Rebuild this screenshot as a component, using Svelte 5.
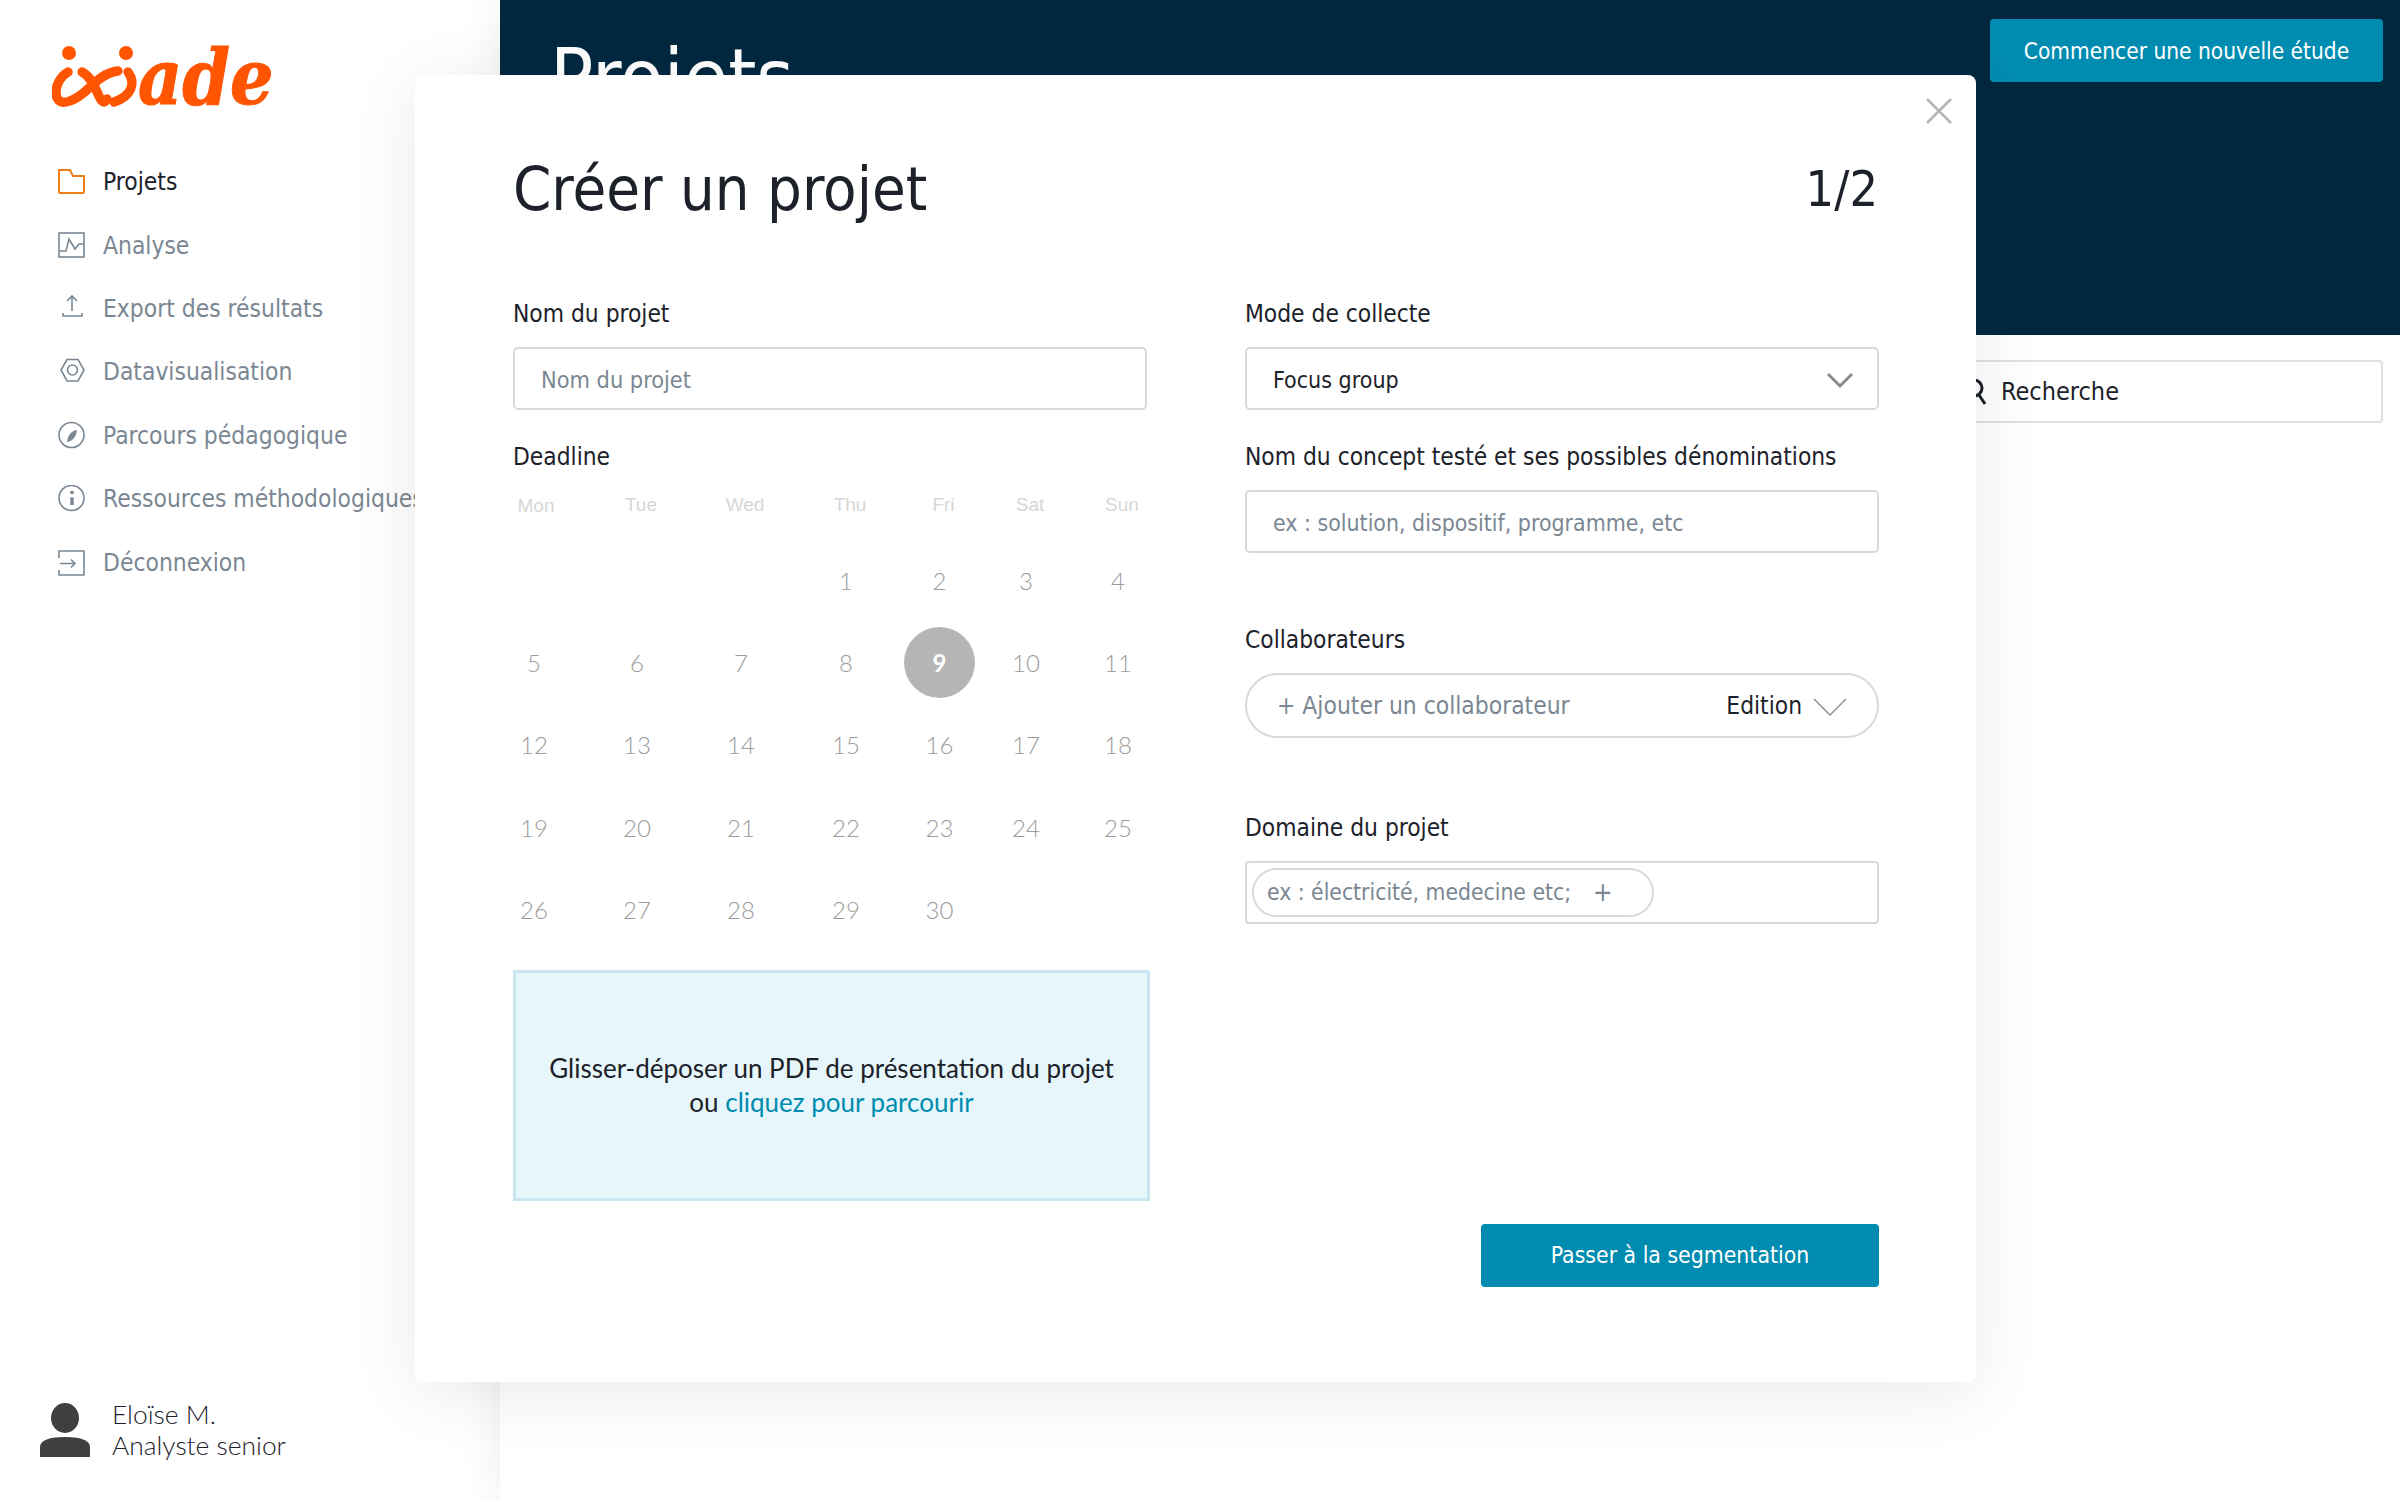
<script lang="ts">
	const navItems = [
		{ label: 'Projets', icon: 'folder', active: true },
		{ label: 'Analyse', icon: 'chart' },
		{ label: 'Export des résultats', icon: 'upload' },
		{ label: 'Datavisualisation', icon: 'hex' },
		{ label: 'Parcours pédagogique', icon: 'compass' },
		{ label: 'Ressources méthodologiques', icon: 'info' },
		{ label: 'Déconnexion', icon: 'logout' }
	];

	const weekDays = ['Mon', 'Tue', 'Wed', 'Thu', 'Fri', 'Sat', 'Sun'];
	const selectedDay = 9;

	// June starts on a Thursday here, so three empty cells first
	const days: (number | null)[] = [null, null, null, ...Array.from({ length: 30 }, (_, i) => i + 1)];
</script>

<div class="page">
	<aside class="sidebar">
		<div class="logo">
			<svg class="logo-mark" width="92" height="72" viewBox="0 0 276 216" aria-hidden="true">
				<circle cx="51" cy="39" r="21" />
				<circle cx="222" cy="39" r="21" />
				<path d="M48 96C18 114 6 150 15 174C27 198 66 186 108 147C132 123 162 96 198 93" />
				<path d="M90 96C114 108 126 135 138 162C147 183 156 195 165 177" />
				<path d="M228 96C252 129 240 168 186 186" />
			</svg>
			<span class="logo-text">ade</span>
		</div>

		<nav class="nav">
			{#each navItems as item}
				<div class="nav-item" class:active={item.active}>
					<svg class="nav-icon" width="30" height="28" viewBox="0 0 30 28" aria-hidden="true">
						{#if item.icon === 'folder'}
							<path d="M2 2h11l3 6h11v16a1 1 0 0 1-1 1H3a1 1 0 0 1-1-1z" />
						{:else if item.icon === 'chart'}
							<rect x="2" y="2" width="25" height="24" />
							<path d="M3 20h6l3-12 6 10 4-5h5" />
						{:else if item.icon === 'upload'}
							<path d="M15 2v15M10 7l5-5 5 5M6 19v3h19v-3" />
						{:else if item.icon === 'hex'}
							<path d="M10 1.5h11L27 12l-6 11H10L4 12z" />
							<circle cx="15.5" cy="12" r="5" />
						{:else if item.icon === 'compass'}
							<circle cx="14.5" cy="14" r="12.5" />
							<path class="fill" d="M20 9c-6 1-9 5-10 12 6-1 9-5 10-12z" />
						{:else if item.icon === 'info'}
							<circle cx="14.5" cy="13" r="12.5" />
							<path class="thick" d="M15 12.5v7.5M15 6v3" />
						{:else}
							<path d="M2 10V3h25v24H2v-5M3 15.5h15M14 11.5l4 4-4 4" />
						{/if}
					</svg>
					<span>{item.label}</span>
				</div>
			{/each}
		</nav>

		<div class="user">
			<svg width="50" height="54" viewBox="0 0 50 54" aria-hidden="true">
				<ellipse cx="25" cy="15" rx="14" ry="15" fill="#3f3f3f" />
				<path d="M0 54V44C0 37 10 34 25 34S50 37 50 44V54z" fill="#3f3f3f" />
			</svg>
			<div class="user-text">
				<div>Eloïse M.</div>
				<div>Analyste senior</div>
			</div>
		</div>
	</aside>

	<main class="main">
		<header class="hero">
			<h1>Projets</h1>
			<button class="btn btn-new">Commencer une nouvelle étude</button>
		</header>
		<div class="search">
			<svg width="22" height="26" viewBox="0 0 22 26" aria-hidden="true">
				<circle cx="9" cy="9" r="8" />
				<path d="M14 16l6 9" />
			</svg>
			<span>Recherche</span>
		</div>
	</main>

	<section class="modal">
		<svg class="close" width="26" height="26" viewBox="0 0 26 26" aria-hidden="true">
			<path d="M1 1l24 24M25 1L1 25" />
		</svg>

		<div class="modal-head">
			<h2>Créer un projet</h2>
			<span class="step">1/2</span>
		</div>

		<div class="columns">
			<div class="col">
				<div class="label">Nom du projet</div>
				<div class="field placeholder">Nom du projet</div>

				<div class="label deadline">Deadline</div>
				<div class="calendar">
					{#each weekDays as day}
						<div class="weekday" class:first={day === 'Mon'}>{day}</div>
					{/each}
					{#each days as day}
						<div class="day">
							{#if day === selectedDay}
								<span class="day-selected">{day}</span>
							{:else if day}
								{day}
							{/if}
						</div>
					{/each}
				</div>

				<div class="dropzone">
					<div>Glisser-déposer un PDF de présentation du projet</div>
					<div>ou <span class="link">cliquez pour parcourir</span></div>
				</div>
			</div>

			<div class="col">
				<div class="label">Mode de collecte</div>
				<div class="field select">
					<span>Focus group</span>
					<svg width="28" height="16" viewBox="0 0 28 16" aria-hidden="true">
						<path d="M2 2l12 12L26 2" />
					</svg>
				</div>

				<div class="label deadline">Nom du concept testé et ses possibles dénominations</div>
				<div class="field placeholder concept">ex : solution, dispositif, programme, etc</div>

				<div class="label collab-label">Collaborateurs</div>
				<div class="pill-field">
					<span class="placeholder-text">+ Ajouter un collaborateur</span>
					<span class="edition">
						Edition
						<svg width="34" height="18" viewBox="0 0 34 18" aria-hidden="true">
							<path d="M1 1l16 16L33 1" />
						</svg>
					</span>
				</div>

				<div class="label domain-label">Domaine du projet</div>
				<div class="tag-field">
					<div class="tag">
						<span>ex : électricité, medecine etc;</span>
						<span class="tag-plus">+</span>
					</div>
				</div>

				<button class="btn btn-next">Passer à la segmentation</button>
			</div>
		</div>
	</section>
</div>

<style>
	:global(body) {
		margin: 0;
		background: #fff;
	}

	.page {
		position: relative;
		display: flex;
		width: 2400px;
		height: 1500px;
		overflow: hidden;
		font-family: 'DejaVu Sans', sans-serif;
		font-stretch: condensed;
		font-size: 24.3px;
		color: #1d2129;
	}

	.sidebar {
		display: flex;
		flex-direction: column;
		width: 500px;
		flex-shrink: 0;
		background: #fff;
	}

	.logo {
		display: flex;
		align-items: flex-end;
		height: 72px;
		margin: 44px 0 0 52px;
		color: #ff5500;
	}

	.logo-mark {
		flex-shrink: 0;
		margin-bottom: 4px;
	}

	.logo-mark circle {
		fill: #ff5500;
	}

	.logo-mark path {
		fill: none;
		stroke: #ff5500;
		stroke-width: 28;
		stroke-linecap: round;
	}

	.logo-text {
		margin-left: -6px;
		font-family: 'DejaVu Serif', serif;
		font-stretch: condensed;
		font-style: italic;
		font-weight: 700;
		font-size: 76px;
		line-height: 76px;
		-webkit-text-stroke: 1px #ff5500;
	}

	.nav {
		display: flex;
		flex-direction: column;
		margin-top: 34px;
		padding-left: 57px;
	}

	.nav-item {
		display: flex;
		align-items: center;
		gap: 16px;
		height: 63.4px;
		white-space: nowrap;
		color: #7a8793;
		font-size: 24.4px;
	}

	.nav-item.active {
		color: #1d2129;
	}

	.nav-icon {
		flex-shrink: 0;
		fill: none;
		stroke: #7a8793;
		stroke-width: 1.6;
	}

	.nav-item.active .nav-icon {
		stroke: #f07d17;
		stroke-width: 2;
	}

	.nav-icon .fill {
		fill: #7a8793;
		stroke: none;
	}

	.nav-icon .thick {
		stroke-width: 3.4;
	}

	.user {
		display: flex;
		align-items: center;
		gap: 22px;
		margin: auto 0 39px 40px;
	}

	.user-text {
		padding-top: 1px;
		font-family: Lato, sans-serif;
		font-stretch: normal;
		font-weight: 300;
		font-size: 26.4px;
		line-height: 31px;
		color: #1d2129;
	}

	.main {
		flex: 1;
		min-width: 0;
		background: #fff;
		box-shadow: 0 0 40px rgba(0, 0, 0, 0.08);
		z-index: 1;
	}

	.hero {
		display: flex;
		justify-content: space-between;
		align-items: flex-start;
		height: 335px;
		padding: 19px 17px 0 50px;
		background: #022840;
		box-sizing: border-box;
	}

	.hero h1 {
		margin: 20px 0 0;
		color: #fff;
		font-weight: 400;
		font-size: 80px;
		line-height: 80px;
	}

	.btn {
		border: none;
		border-radius: 4px;
		background: #008cb0;
		color: #fff;
		font: inherit;
		font-stretch: condensed;
		font-size: 22.8px;
		padding: 0;
	}

	.btn-new {
		width: 393px;
		height: 63px;
		font-size: 22.5px;
	}

	.search {
		display: flex;
		align-items: center;
		gap: 14px;
		box-sizing: border-box;
		width: 520px;
		height: 63px;
		margin: 25px 17px 0 auto;
		padding-left: 100px;
		border: 2px solid #dfdfdf;
		border-radius: 4px;
		font-size: 25px;
	}

	.search svg {
		fill: none;
		stroke: #1d2129;
		stroke-width: 3;
	}

	.modal {
		position: absolute;
		left: 415px;
		top: 75px;
		z-index: 2;
		box-sizing: border-box;
		width: 1561px;
		height: 1307px;
		padding: 0 96px 0 98px;
		background: #fff;
		border-radius: 8px;
		box-shadow: 0 10px 70px rgba(0, 0, 0, 0.09);
	}

	.close {
		position: absolute;
		right: 24px;
		top: 23px;
		fill: none;
		stroke: #b4b4b4;
		stroke-width: 2.5;
	}

	.modal-head {
		display: flex;
		justify-content: space-between;
		align-items: center;
		height: 115px;
		padding-top: 56px;
	}

	.modal-head h2 {
		margin: 0;
		font-weight: 400;
		font-size: 61px;
	}

	.step {
		margin-right: 2px;
		font-size: 50px;
	}

	.columns {
		display: grid;
		grid-template-columns: 634px 634px;
		column-gap: 98px;
		margin-top: 50px;
	}

	.col {
		display: flex;
		flex-direction: column;
	}

	.label {
		height: 36px;
		line-height: 36px;
		margin-bottom: 15px;
		white-space: nowrap;
	}

	.field {
		box-sizing: border-box;
		height: 63px;
		padding: 2px 26px 0;
		display: flex;
		align-items: center;
		border: 2px solid #d9d9d9;
		border-radius: 5px;
	}

	.placeholder,
	.placeholder-text {
		color: #7a8793;
	}

	.placeholder {
		font-size: 23.3px;
	}

	.concept {
		font-size: 22.9px;
	}

	.select {
		justify-content: space-between;
		padding-right: 23px;
		font-size: 23px;
	}

	.select svg {
		fill: none;
		stroke: #8a8a8a;
		stroke-width: 3;
	}

	.deadline {
		margin-top: 29px;
	}

	/* column widths are uneven on purpose, the reference table is not regular */
	.calendar {
		display: grid;
		grid-template-columns: 103px 103px 105px 105px 82px 91px 93px;
		grid-template-rows: 55.5px;
		grid-auto-rows: 82.3px;
		margin: -6.5px 0 0 -30.5px;
		font-family: Lato, sans-serif;
		font-stretch: normal;
		font-weight: 300;
		color: #9b9b9b;
	}

	.weekday {
		height: 42px;
		display: flex;
		align-items: center;
		justify-content: center;
		color: #d6d6d6;
		font-size: 19px;
		font-family: 'Liberation Sans', sans-serif;
		transform: translateX(4px);
	}

	.weekday.first {
		padding-top: 3px;
		box-sizing: border-box;
		transform: translateX(2px);
	}

	.day {
		display: flex;
		align-items: center;
		justify-content: center;
		font-size: 24px;
	}

	.day-selected {
		display: flex;
		align-items: center;
		justify-content: center;
		width: 71px;
		height: 71px;
		border-radius: 50%;
		background: #b5b5b5;
		color: #fff;
		font-weight: 700;
	}

	.dropzone {
		box-sizing: border-box;
		width: 637px;
		height: 231px;
		margin-top: 19.5px;
		display: flex;
		flex-direction: column;
		align-items: center;
		justify-content: center;
		border: 3px solid #c8e6ef;
		background: #e6f6fb;
		font-family: Lato, sans-serif;
		font-stretch: normal;
		font-size: 26px;
		line-height: 34px;
		color: #1d2129;
	}

	.link {
		color: #008cb0;
	}

	.collab-label {
		margin-top: 68.5px;
	}

	.pill-field {
		display: flex;
		align-items: center;
		justify-content: space-between;
		box-sizing: border-box;
		height: 65px;
		padding: 0 30px 0 30px;
		border: 2px solid #d9d9d9;
		border-radius: 33px;
	}

	.placeholder-text {
		font-size: 24.4px;
	}

	.edition {
		display: flex;
		align-items: center;
		gap: 11px;
	}

	.edition svg {
		fill: none;
		stroke: #8a8a8a;
		stroke-width: 1.4;
		margin-top: 4px;
	}

	.domain-label {
		margin-top: 72px;
		margin-bottom: 15px;
	}

	.tag-field {
		box-sizing: border-box;
		height: 63px;
		padding: 5px;
		border: 2px solid #d9d9d9;
		border-radius: 4px;
	}

	.tag {
		display: flex;
		align-items: center;
		gap: 22px;
		box-sizing: border-box;
		width: 402px;
		height: 49px;
		padding-left: 13px;
		border: 2px solid #d9d9d9;
		border-radius: 25px;
		color: #7a8793;
		font-size: 22.7px;
	}

	.tag-plus {
		font-size: 26px;
	}

	.btn-next {
		align-self: flex-end;
		width: 398px;
		height: 63px;
		margin-top: 300px;
	}
</style>
